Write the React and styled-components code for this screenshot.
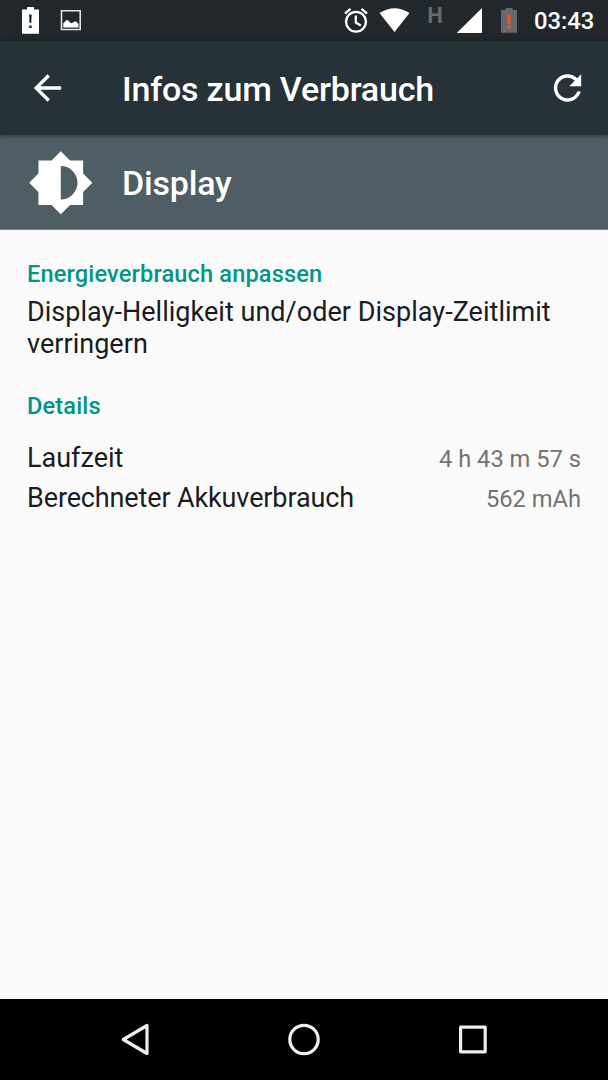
import styled, { createGlobalStyle } from "styled-components";

const GlobalStyle = createGlobalStyle`
  * {
    box-sizing: border-box;
  }
  body {
    margin: 0;
    font-family: Roboto, "Noto Sans", sans-serif;
  }
`;

const Screen = styled.div`
  width: 608px;
  height: 1080px;
  display: flex;
  flex-direction: column;
  overflow: hidden;
  background-color: #fafafa;
`;
const StatusBar = styled.div`
  height: 41px;
  flex: none;
  display: flex;
  align-items: center;
  justify-content: space-between;
  background-color: #21272a;
`;
const StatusIcons = styled.svg`
  display: block;
  height: 41px;
  width: ${(props) => props.$width}px;
`;
const StatusRight = styled.div`
  display: flex;
  align-items: center;
`;
const NetworkType = styled.text`
  font-size: 22px;
  font-weight: 700;
  fill: #666c6e;
`;
const Clock = styled.div`
  width: 74px;
  padding-top: 1px;
  font-size: 23.8px;
  font-weight: 500;
  line-height: 40px;
  color: white;
`;
const AppBar = styled.header`
  height: 94px;
  flex: none;
  display: flex;
  align-items: center;
  background-color: #263238;
  box-shadow: 0 1px 5px rgba(0, 0, 0, 0.45);
  z-index: 1;
`;
const IconSlot = styled.div`
  width: 122px;
  flex: none;
  padding-left: ${(props) => props.$left}px;
`;
const Icon = styled.svg`
  display: block;
  width: ${(props) => props.$size}px;
  height: ${(props) => props.$size}px;
  fill: white;
`;
const Title = styled.h1`
  flex: 1;
  margin: 0;
  padding-top: ${(props) => props.$top || 0}px;
  font-size: 34px;
  font-weight: 500;
  line-height: 40px;
  letter-spacing: -0.2px;
  color: white;
`;
const Refresh = styled.div`
  padding-right: 20px;
`;
const Header = styled.div`
  height: 95px;
  flex: none;
  display: flex;
  align-items: center;
  background-color: #4f5d64;
  border-bottom: 1px solid #7d888d;
`;
const Content = styled.main`
  flex: 1;
  padding: 28px 27px 0;
`;
const Category = styled.h2`
  margin: 0;
  font-size: 23.6px;
  font-weight: 500;
  line-height: 32px;
  letter-spacing: 0.14px;
  color: #009688;
`;
const Text = styled.p`
  margin: 6px 0 30px;
  font-size: 27px;
  line-height: 32px;
  letter-spacing: 0.03px;
  color: #1a1c1e;
`;
const Details = styled.div`
  padding-top: 16px;
`;
const Row = styled.div`
  height: 40px;
  display: flex;
  align-items: center;
  justify-content: space-between;
`;
const Label = styled.span`
  font-size: 27px;
  letter-spacing: ${(props) => props.$spacing}px;
  color: #1a1c1e;
`;
const Value = styled.span`
  padding-top: 1px;
  font-size: 23.7px;
  color: #737373;
`;
const NavBar = styled.nav`
  height: 81px;
  flex: none;
  background-color: black;
`;
const NavIcons = styled.svg`
  display: block;
  fill: none;
  stroke: #eeeeee;
  stroke-width: 3.2;
`;

const details = [
  { label: "Laufzeit", value: "4 h 43 m 57 s", spacing: 0 },
  { label: "Berechneter Akkuverbrauch", value: "562 mAh", spacing: -0.13 },
];

export default function App() {
  return (
    <Screen>
      <GlobalStyle />
      <StatusBar>
        <StatusIcons $width={100} viewBox="0 0 100 41">
          <path d="M22 9.500h5V7h7v2.500h5v24.300H22z" fill="white" />
          <path d="M29.100 14.500h2.600l-.4 8.500h-1.800zM29.100 25.500h2.600V28h-2.600z" fill="#21272a" />
          <path d="M61.500 10.800h18.700v18.700H61.500z" fill="none" stroke="#e4e6e6" strokeWidth="1.600" />
          <path
            d="M63.300 27.500v-4.200l3-3 1.500-.3 3 3.300 1.200-.2 2.600-1.600h1.500l2.400 2.600v3.400z"
            fill="white"
          />
        </StatusIcons>
        <StatusRight>
          <StatusIcons $width={190} viewBox="344 0 190 41">
            <g fill="none" stroke="white" strokeWidth="2.300">
              <circle cx="356" cy="21.800" r="9.900" />
              <path d="M345 13.500l5.500-4.600M367 13.500l-5.500-4.600M355.800 15.500v7l5 3" />
            </g>
            <path d="M379.500 13Q394.500 3.500 409.500 13L394.500 32z" fill="white" />
            <NetworkType x="427.300" y="22.500">H</NetworkType>
            <path d="M456.800 33L482 8V33z" fill="white" />
            <path d="M501 10h4.500V8h7v2h4.500v22.800h-16z" fill="#646a6c" />
            <path d="M507.300 14.500h3.600l-.6 9.500h-2.400zM507.500 25.300h3.200v2.900h-3.200z" fill="#f4511e" />
          </StatusIcons>
          <Clock>03:43</Clock>
        </StatusRight>
      </StatusBar>
      <AppBar>
        <IconSlot $left={27}>
          <Icon $size={41} viewBox="0 0.300 24 24">
            <path d="M20 11H7.830l5.590-5.590L12 4l-8 8 8 8 1.410-1.410L7.830 13H20v-2z" />
          </Icon>
        </IconSlot>
        <Title $top={2}>Infos zum Verbrauch</Title>
        <Refresh>
          <Icon $size={41} viewBox="0 0.300 24 24">
            <path d="M17.650 6.350C16.200 4.900 14.210 4 12 4c-4.420 0-7.990 3.580-7.990 8s3.570 8 7.990 8c3.730 0 6.840-2.550 7.730-6h-2.080c-.82 2.330-3.040 4-5.650 4-3.310 0-6-2.690-6-6s2.690-6 6-6c1.660 0 3.140.69 4.220 1.780L13 11h7V4l-2.350 2.350z" />
          </Icon>
        </Refresh>
      </AppBar>
      <Header>
        <IconSlot $left={27}>
          <Icon $size={67} viewBox="-0.100 -0.100 24 24">
            <path d="M20 15.310L23.310 12 20 8.690V4h-4.690L12 .69 8.690 4H4v4.690L.69 12 4 15.310V20h4.690L12 23.310 15.310 20H20v-4.690zM12 18V6c3.310 0 6 2.690 6 6s-2.690 6-6 6z" />
          </Icon>
        </IconSlot>
        <Title $top={2}>Display</Title>
      </Header>
      <Content>
        <Category>Energieverbrauch anpassen</Category>
        <Text>Display-Helligkeit und/oder Display-Zeitlimit verringern</Text>
        <Category>Details</Category>
        <Details>
          {details.map((item) => (
            <Row key={item.label}>
              <Label $spacing={item.spacing}>{item.label}</Label>
              <Value>{item.value}</Value>
            </Row>
          ))}
        </Details>
      </Content>
      <NavBar>
        <NavIcons width="608" height="81" viewBox="0 0 608 81">
          <path d="M123.300 40.500L147 26.500V54.500z" strokeLinejoin="round" />
          <circle cx="304" cy="40.500" r="14.200" />
          <rect x="460.600" y="28.200" width="24.600" height="24.600" strokeLinejoin="round" />
        </NavIcons>
      </NavBar>
    </Screen>
  );
}
